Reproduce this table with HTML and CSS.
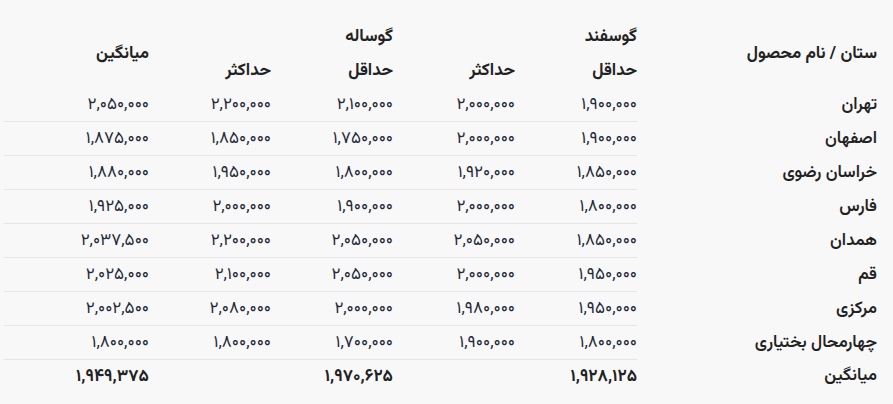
FILE: index.html
```html
<!DOCTYPE html>
<html lang="fa" dir="rtl">
<head>
<meta charset="utf-8">
<link rel="stylesheet" href="styles.css">
</head>
<body>
<table class="price-table">
  <colgroup>
    <col class="c-prov"><col class="c-num"><col class="c-num"><col class="c-num"><col class="c-num"><col class="c-avg">
  </colgroup>
  <thead>
    <tr class="h1">
      <th rowspan="2" class="prov">ستان / نام محصول</th>
      <th colspan="2" class="grp">گوسفند</th>
      <th colspan="2" class="grp">گوساله</th>
      <th rowspan="2" class="avg-h">میانگین</th>
    </tr>
    <tr class="h2">
      <th>حداقل</th><th>حداکثر</th><th>حداقل</th><th>حداکثر</th>
    </tr>
  </thead>
  <tbody>
    <tr><th class="prov">تهران</th><td>۱,۹۰۰,۰۰۰</td><td>۲,۰۰۰,۰۰۰</td><td>۲,۱۰۰,۰۰۰</td><td>۲,۲۰۰,۰۰۰</td><td>۲,۰۵۰,۰۰۰</td></tr>
    <tr><th class="prov">اصفهان</th><td>۱,۹۰۰,۰۰۰</td><td>۲,۰۰۰,۰۰۰</td><td>۱,۷۵۰,۰۰۰</td><td>۱,۸۵۰,۰۰۰</td><td>۱,۸۷۵,۰۰۰</td></tr>
    <tr><th class="prov">خراسان رضوی</th><td>۱,۸۵۰,۰۰۰</td><td>۱,۹۲۰,۰۰۰</td><td>۱,۸۰۰,۰۰۰</td><td>۱,۹۵۰,۰۰۰</td><td>۱,۸۸۰,۰۰۰</td></tr>
    <tr><th class="prov">فارس</th><td>۱,۸۰۰,۰۰۰</td><td>۲,۰۰۰,۰۰۰</td><td>۱,۹۰۰,۰۰۰</td><td>۲,۰۰۰,۰۰۰</td><td>۱,۹۲۵,۰۰۰</td></tr>
    <tr><th class="prov">همدان</th><td>۱,۸۵۰,۰۰۰</td><td>۲,۰۵۰,۰۰۰</td><td>۲,۰۵۰,۰۰۰</td><td>۲,۲۰۰,۰۰۰</td><td>۲,۰۳۷,۵۰۰</td></tr>
    <tr><th class="prov">قم</th><td>۱,۹۵۰,۰۰۰</td><td>۲,۰۰۰,۰۰۰</td><td>۲,۰۵۰,۰۰۰</td><td>۲,۱۰۰,۰۰۰</td><td>۲,۰۲۵,۰۰۰</td></tr>
    <tr><th class="prov">مرکزی</th><td>۱,۹۵۰,۰۰۰</td><td>۱,۹۸۰,۰۰۰</td><td>۲,۰۰۰,۰۰۰</td><td>۲,۰۸۰,۰۰۰</td><td>۲,۰۰۲,۵۰۰</td></tr>
    <tr><th class="prov">چهارمحال بختیاری</th><td>۱,۸۰۰,۰۰۰</td><td>۱,۹۰۰,۰۰۰</td><td>۱,۷۰۰,۰۰۰</td><td>۱,۸۰۰,۰۰۰</td><td>۱,۸۰۰,۰۰۰</td></tr>
    <tr class="mean"><th class="prov">میانگین</th><td colspan="2">۱,۹۲۸,۱۲۵</td><td colspan="2">۱,۹۷۰,۶۲۵</td><td>۱,۹۴۹,۳۷۵</td></tr>
  </tbody>
</table>
</body>
</html>
```

FILE: styles.css
```css
html, body {
  margin: 0;
  padding: 0;
  background: #f8f8f8;
}
body {
  font-family: "Vazirmatn", "Noto Sans Arabic", "DejaVu Sans", sans-serif;
  color: #222;
  padding: 20px 0 0 0;
}
.price-table {
  border-collapse: collapse;
  table-layout: fixed;
  width: 889px;
  margin-left: 4px;
}
.c-prov { width: 256px; }
.c-num { width: 122px; }
.c-avg { width: 145px; }
.price-table th,
.price-table td {
  padding: 0;
  height: 33px;
  line-height: 20px;
  text-align: right;
  vertical-align: middle;
  white-space: nowrap;
}
.price-table thead th {
  font-size: 17px;
  font-weight: bold;
  color: #222;
  height: 34px;
}
.price-table thead th.prov {
  padding-right: 16px;
}
.price-table tbody th.prov {
  padding-right: 16px;
  font-size: 17px;
  font-weight: 600;
  color: #222;
}
.price-table tbody td {
  font-size: 17px;
  color: #252a3a;
  border-bottom: 1px solid #e6e6e6;
}
.price-table tbody tr.mean td {
  border-bottom: none;
  font-weight: bold;
  font-size: 17px;
  color: #222;
}
```
